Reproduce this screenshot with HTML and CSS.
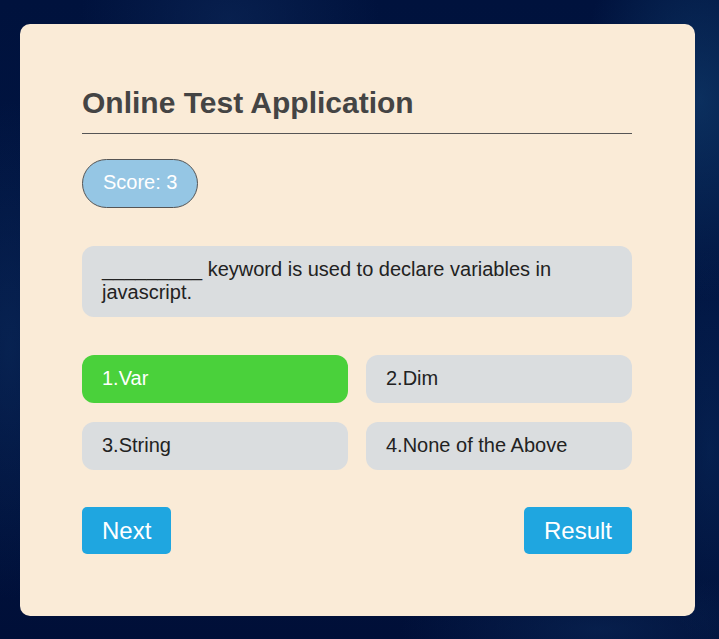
FILE: index.html
```html
<!DOCTYPE html>
<html lang="en">
<head>
<meta charset="utf-8">
<title>Online Test Application</title>
<link rel="stylesheet" href="styles.css">
</head>
<body>
<main class="card">
  <h1 class="title">Online Test Application</h1>
  <div class="score">Score: 3</div>
  <div class="question">_________ keyword is used to declare variables in javascript.</div>
  <div class="options">
    <button class="option correct">1.Var</button>
    <button class="option">2.Dim</button>
    <button class="option">3.String</button>
    <button class="option">4.None of the Above</button>
  </div>
  <div class="actions">
    <button class="btn">Next</button>
    <button class="btn">Result</button>
  </div>
</main>
</body>
</html>
```
FILE: styles.css
```css
* { box-sizing: border-box; }
html, body { height: 100%; }
body {
  margin: 0;
  padding: 24px 24px 23px 20px;
  font-family: "Liberation Sans", Arial, sans-serif;
  background-color: #001034;
  background-image:
    radial-gradient(ellipse 120px 200px at 700px 100px, rgba(20,70,120,0.55), transparent),
    radial-gradient(ellipse 150px 120px at 230px 20px, rgba(15,45,95,0.5), transparent),
    radial-gradient(ellipse 200px 60px at 600px 630px, rgba(15,50,100,0.45), transparent),
    radial-gradient(ellipse 80px 250px at 10px 350px, rgba(15,50,100,0.45), transparent),
    radial-gradient(ellipse 60px 200px at 710px 450px, rgba(10,45,95,0.5), transparent),
    linear-gradient(180deg, #00123d 0%, #011542 50%, #000f38 100%);
}
.card {
  background: #faebd7;
  border-radius: 10px;
  padding: 62px 63px 62px 62px;
  width: 675px;
}
.title {
  margin: 0;
  font-size: 30px;
  line-height: 34px;
  font-weight: bold;
  color: #444;
  padding-bottom: 13px;
  border-bottom: 1px solid #555;
}
.score {
  display: inline-block;
  margin-top: 25px;
  padding: 11px 20px 13px;
  line-height: 23px;
  font-size: 20px;
  color: #fff;
  background: #95c6e4;
  border: 1px solid #555;
  border-radius: 25px;
}
.question {
  margin-top: 38px;
  background: #dadddf;
  border-radius: 12px;
  padding: 12px 20px 13px;
  font-size: 20px;
  line-height: 23px;
  color: #222;
  height: 71px;
}
.options {
  margin-top: 38px;
  display: grid;
  grid-template-columns: 1fr 1fr;
  gap: 19px 18px;
}
.option {
  font-family: inherit;
  text-align: left;
  border: none;
  background: #dadddf;
  border-radius: 12px;
  padding: 12px 20px 13px;
  font-size: 20px;
  line-height: 23px;
  color: #222;
  height: 48px;
}
.option.correct {
  background: #4ad13b;
  color: #fff;
}
.actions {
  margin-top: 37px;
  display: flex;
  justify-content: space-between;
}
.btn {
  font-family: inherit;
  border: none;
  background: #1fa6e0;
  color: #fff;
  font-size: 24px;
  line-height: 27px;
  padding: 10px 20px;
  border-radius: 5px;
}
```
